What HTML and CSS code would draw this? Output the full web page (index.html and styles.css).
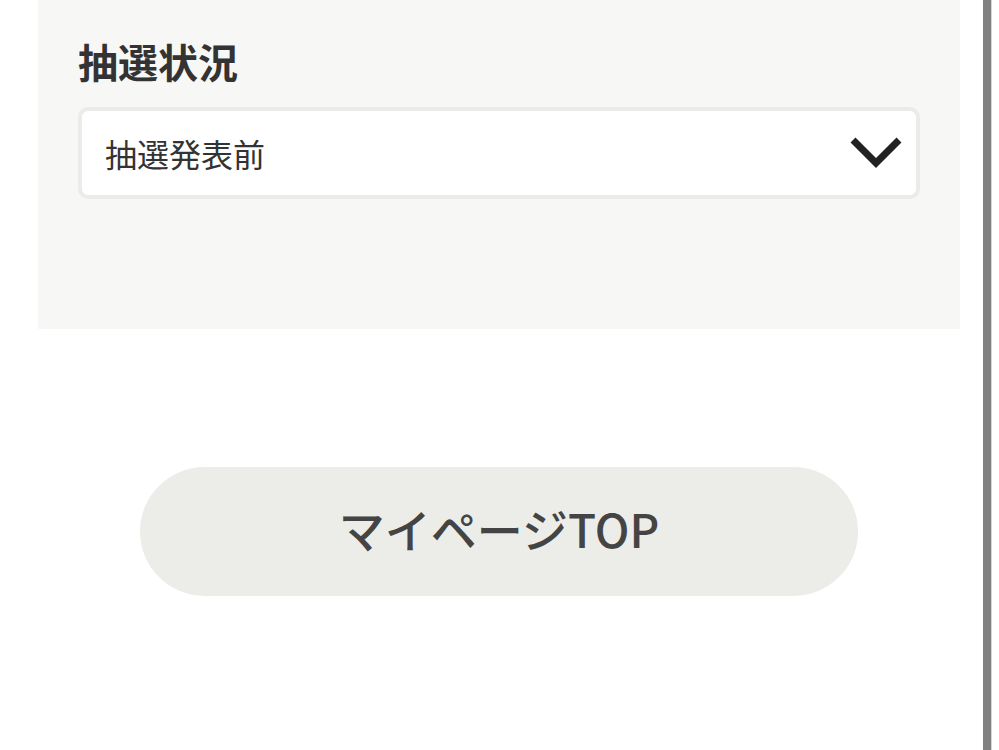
FILE: index.html
```html
<!DOCTYPE html>
<html lang="ja">
<head>
  <meta charset="UTF-8">
  <meta name="viewport" content="width=device-width, initial-scale=1.0">
  <title>マイページ</title>
  <link rel="stylesheet" href="styles.css">
</head>
<body>
  <div class="page">
    <div class="content">
      <div class="filter-panel">
        <h2 class="filter-title">抽選状況</h2>
        <div class="select-box">
          <span class="select-value">抽選発表前</span>
          <svg class="select-arrow" width="52" height="32" viewBox="0 0 52 32">
            <polyline points="3,3 26,26 49,3" fill="none" stroke="#222" stroke-width="7"/>
          </svg>
        </div>
      </div>
      <div class="actions">
        <a href="#" class="top-btn">マイページTOP</a>
      </div>
    </div>
    <div class="scrollbar"></div>
  </div>
</body>
</html>
```

FILE: styles.css
```css
body {
  margin: 0;
  font-family: "Noto Sans CJK JP", "Noto Sans", sans-serif;
  color: #333;
  background-color: #fff;
}
.page {
  display: flex;
  min-height: 750px;
}
.content {
  flex: 1;
  padding-left: 38px;
  padding-right: 23px;
}
.filter-panel {
  background-color: #f7f7f5;
  padding: 31px 40px 130px 40px;
}
.filter-title {
  margin: 0 0 16px 0;
  font-size: 40px;
  font-weight: 700;
  line-height: 60px;
  color: #333;
}
.select-box {
  display: flex;
  align-items: center;
  justify-content: space-between;
  height: 84px;
  padding: 0 14px 0 23px;
  background-color: #fff;
  border: 4px solid #ebebe7;
  border-radius: 10px;
}
.select-value {
  font-size: 32px;
  color: #333;
}
.actions {
  display: flex;
  justify-content: center;
  padding-top: 138px;
}
.top-btn {
  display: flex;
  align-items: center;
  justify-content: center;
  box-sizing: border-box;
  width: 718px;
  height: 129px;
  padding-bottom: 8px;
  border-radius: 65px;
  background-color: #ecece8;
  color: #444;
  font-size: 46px;
  font-weight: 500;
  text-decoration: none;
}
.scrollbar {
  width: 8px;
  background-color: #808080;
  border-right: 1px solid #d6d6d6;
  margin-right: 7px;
}
```
